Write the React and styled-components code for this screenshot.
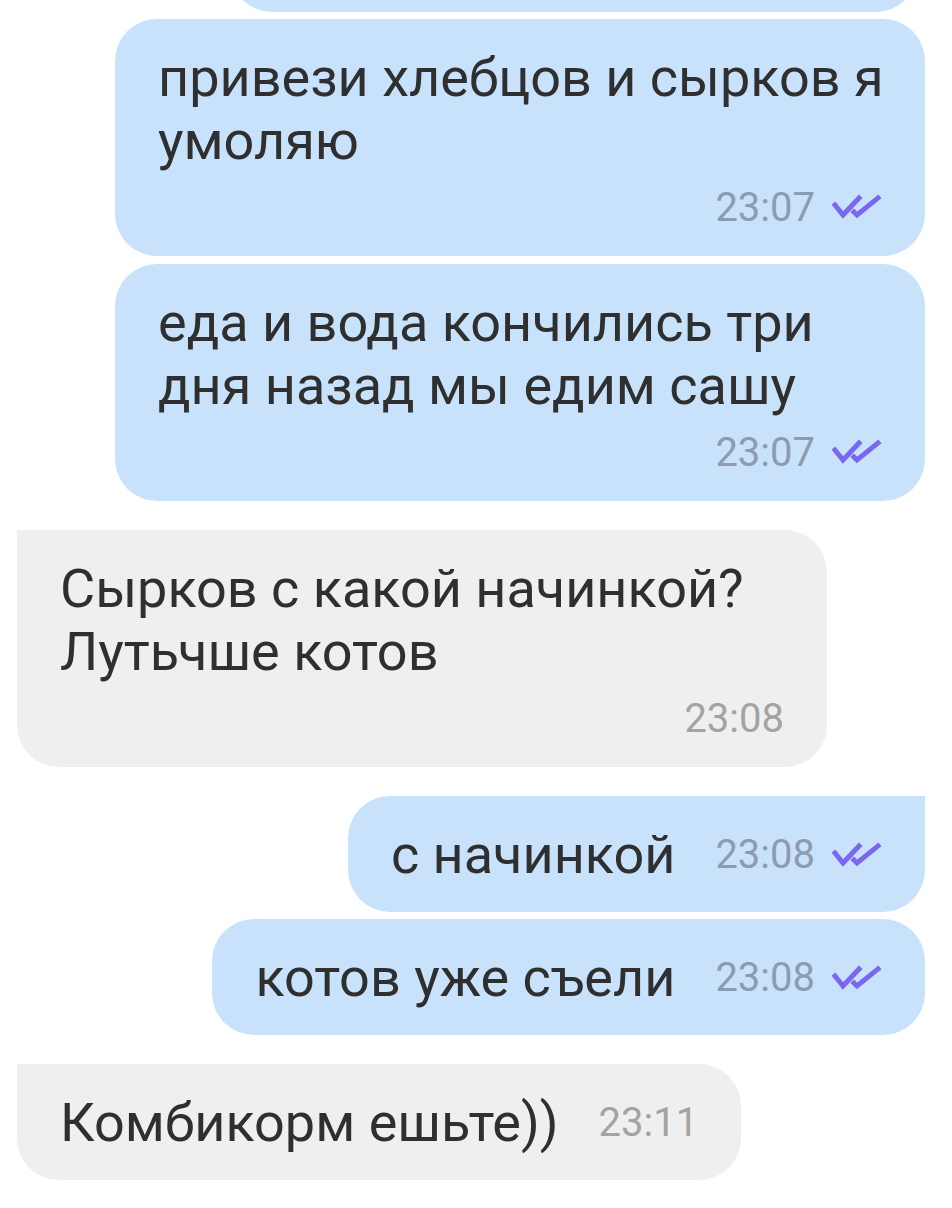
import React from "react";
import styled, { createGlobalStyle, css } from "styled-components";

const GlobalStyle = createGlobalStyle`
  html, body {
    margin: 0;
    background: #ffffff;
    font-family: Roboto, "Noto Sans", "Liberation Sans", sans-serif;
  }
`;

const Chat = styled.div`
  display: flex;
  flex-direction: column;
  padding: 0 27px 40px 17px;
  overflow: hidden;
`;

const Bubble = styled.div`
  box-sizing: border-box;
  max-width: 810px;
  margin-top: ${(p) => p.$gap}px;
  padding: 27px 43px 26px;
  border-radius: 42px;
  color: #2f2f2f;
  ${(p) =>
    p.$out
      ? css`
          align-self: flex-end;
          background: #c9e2fc;
        `
      : css`
          align-self: flex-start;
          background: #efefef;
        `}
  ${(p) => p.$wide && "width: 810px;"}
  ${(p) => p.$first && (p.$out ? "border-top-right-radius: 0;" : "border-top-left-radius: 0;")}
  ${(p) =>
    p.$inline &&
    css`
      display: flex;
      align-items: center;
      gap: 40px;
    `}
`;

/* the message above the screen edge, only its bottom shows */
const CutBubble = styled(Bubble)`
  height: 120px;
  margin-top: -108px;
  margin-right: 7px;
  width: 688px;
`;

const Text = styled.div`
  font-size: 54px;
  line-height: 63px;
  white-space: nowrap;
`;

const Meta = styled.div`
  display: flex;
  align-items: center;
  justify-content: flex-end;
  gap: 17px;
  height: 46px;
  margin-top: ${(p) => (p.$below ? 12 : 0)}px;
  font-size: 40px;
  color: ${(p) => (p.$out ? "#8b9bb0" : "#a3a3a3")};
`;

function Ticks() {
  return (
    <svg width="50" height="26" viewBox="0 0 50 26" fill="none">
      <path
        d="M3 11 L11 21 L27 4"
        stroke="#7a67f0"
        strokeWidth="5"
        strokeLinecap="square"
        strokeLinejoin="miter"
      />
      <path
        d="M22 18 L25 21 L46 4"
        stroke="#7a67f0"
        strokeWidth="5"
        strokeLinecap="square"
        strokeLinejoin="miter"
      />
    </svg>
  );
}

function Message({ out, first, gap, lines, time, wide }) {
  return (
    <Bubble $out={out} $first={first} $gap={gap} $wide={wide} $inline={!wide}>
      <Text>
        {lines.map((l, i) => (
          <React.Fragment key={i}>
            {i > 0 && <br />}
            {l}
          </React.Fragment>
        ))}
      </Text>
      <Meta $out={out} $below={wide}>
        <span>{time}</span>
        {out && <Ticks />}
      </Meta>
    </Bubble>
  );
}

const messages = [
  { out: true, gap: 7, wide: true, lines: ["привези хлебцов и сырков я", "умоляю"], time: "23:07" },
  { out: true, gap: 8, wide: true, lines: ["еда и вода кончились три", "дня назад мы едим сашу"], time: "23:07" },
  { out: false, first: true, gap: 29, wide: true, lines: ["Сырков с какой начинкой?", "Лутьчше котов"], time: "23:08" },
  { out: true, first: true, gap: 29, lines: ["с начинкой"], time: "23:08" },
  { out: true, gap: 7, lines: ["котов уже съели"], time: "23:08" },
  { out: false, first: true, gap: 29, lines: ["Комбикорм ешьте))"], time: "23:11" },
];

export default function App() {
  return (
    <>
      <GlobalStyle />
      <Chat>
        <CutBubble $out />
        {messages.map((m, i) => (
          <Message key={i} {...m} />
        ))}
      </Chat>
    </>
  );
}
